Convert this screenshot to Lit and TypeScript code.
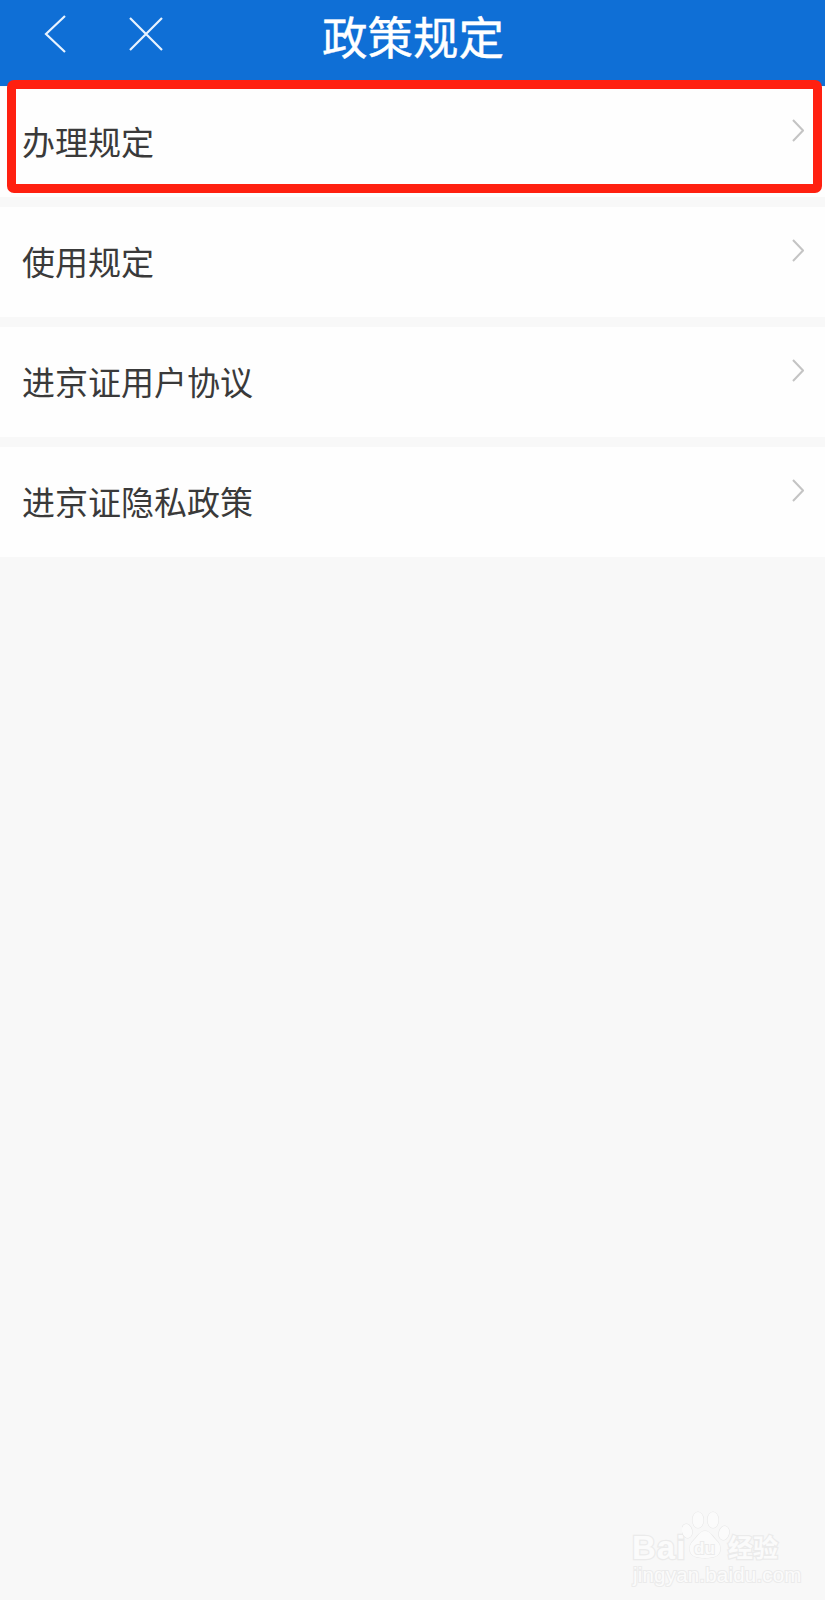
import { LitElement, css, html } from "lit";
import { customElement } from "lit/decorators.js";

const ITEMS = ["办理规定", "使用规定", "进京证用户协议", "进京证隐私政策"];

@customElement("app-root")
export class AppRoot extends LitElement {
  static styles = css`
    :host {
      display: block;
      position: relative;
      height: 1600px;
      overflow: hidden;
      background: #f8f8f8;
      font-family: "Noto Sans CJK SC", "Noto Sans", sans-serif;
    }

    .header {
      height: 86px;
      background: #0f6fd6;
      position: relative;
      display: flex;
      align-items: center;
      justify-content: center;
    }

    .title {
      color: #fff;
      font-size: 45.5px;
      line-height: 72px;
      font-weight: 400;
      margin-bottom: 17px;
      margin-left: 1px;
      -webkit-text-stroke: 0.4px #fff;
    }

    .nav {
      position: absolute;
      top: 15px;
      left: 44px;
      display: flex;
      gap: 63px;
      align-items: center;
    }

    .nav svg {
      display: block;
      fill: none;
      stroke: #e8f3ff;
      stroke-width: 2.2;
    }

    .list {
      display: flex;
      flex-direction: column;
      gap: 10px;
      padding-top: 1px;
    }

    .row {
      height: 110px;
      background: #fefefe;
      display: flex;
      justify-content: space-between;
      padding: 0 21px 0 22px;
    }

    .label {
      color: #3a3a3a;
      font-size: 33px;
      line-height: 100px;
      padding-top: 4px;
    }

    .chevron {
      display: block;
      margin-top: 32px;
      fill: none;
      stroke: #c4c4c4;
      stroke-width: 2;
    }

    .highlight {
      position: absolute;
      box-sizing: border-box;
      left: 7px;
      top: 80px;
      width: 815px;
      height: 113px;
      border: 9px solid #ff2010;
      border-radius: 7px;
    }

    .mark {
      position: absolute;
      left: 632px;
      top: 1510px;
      width: 152px;
      height: 76px;
      color: #fbfbfb;
      -webkit-text-stroke: 2.5px #ebebeb;
      paint-order: stroke fill;
    }

    .mark span {
      position: absolute;
      white-space: nowrap;
      line-height: 1;
    }

    .mark .bai {
      left: 0;
      top: 19px;
      font: 700 33px "Liberation Sans", sans-serif;
      letter-spacing: 1px;
    }

    .mark .du {
      left: 62px;
      top: 29px;
      font: 700 17px "Liberation Sans", sans-serif;
      -webkit-text-stroke-width: 2px;
    }

    .mark .jy {
      left: 96px;
      top: 24px;
      font-size: 25px;
      font-weight: 700;
    }

    .mark .url {
      left: 1px;
      top: 53px;
      font: 400 20.5px "Liberation Sans", sans-serif;
      letter-spacing: 0.2px;
      -webkit-text-stroke-width: 2px;
    }

    .paw {
      position: absolute;
      left: 50px;
      top: 0;
      fill: #fbfbfb;
      stroke: #e8e8e8;
      stroke-width: 1.2;
    }
  `;

  render() {
    return html`
      <div class="header">
        <div class="nav">
          <svg width="22" height="38" viewBox="0 0 22 38"><path d="M21 1 2 19l19 18" /></svg>
          <svg width="34" height="34" viewBox="0 0 34 34"><path d="M1 1l32 32M33 1 1 33" /></svg>
        </div>
        <div class="title">政策规定</div>
      </div>
      <div class="list">
        ${ITEMS.map(
          (item) => html`
            <div class="row">
              <span class="label">${item}</span>
              <svg class="chevron" width="12" height="23" viewBox="0 0 12 23"><path d="M1 1l10 10.5L1 22" /></svg>
            </div>
          `,
        )}
      </div>
      <div class="highlight"></div>
      <div class="mark">
        <span class="bai">Bai</span>
        <svg class="paw" width="48" height="50" viewBox="0 0 48 50">
          <ellipse cx="5" cy="21" rx="5" ry="7" transform="rotate(-15 5 21)" />
          <ellipse cx="16" cy="10" rx="5.5" ry="8" />
          <ellipse cx="31" cy="10" rx="5.5" ry="8" />
          <ellipse cx="42" cy="23" rx="5" ry="7" transform="rotate(15 42 23)" />
          <path d="M23 21c5 0 7 5 11 9 4 4 5 7 4 11-1 5-6 7-15 7s-14-2-15-7c-1-4 0-7 4-11 4-4 6-9 11-9z" />
        </svg>
        <span class="du">du</span>
        <span class="jy">经验</span>
        <span class="url">jingyan.baidu.com</span>
      </div>
    `;
  }
}
